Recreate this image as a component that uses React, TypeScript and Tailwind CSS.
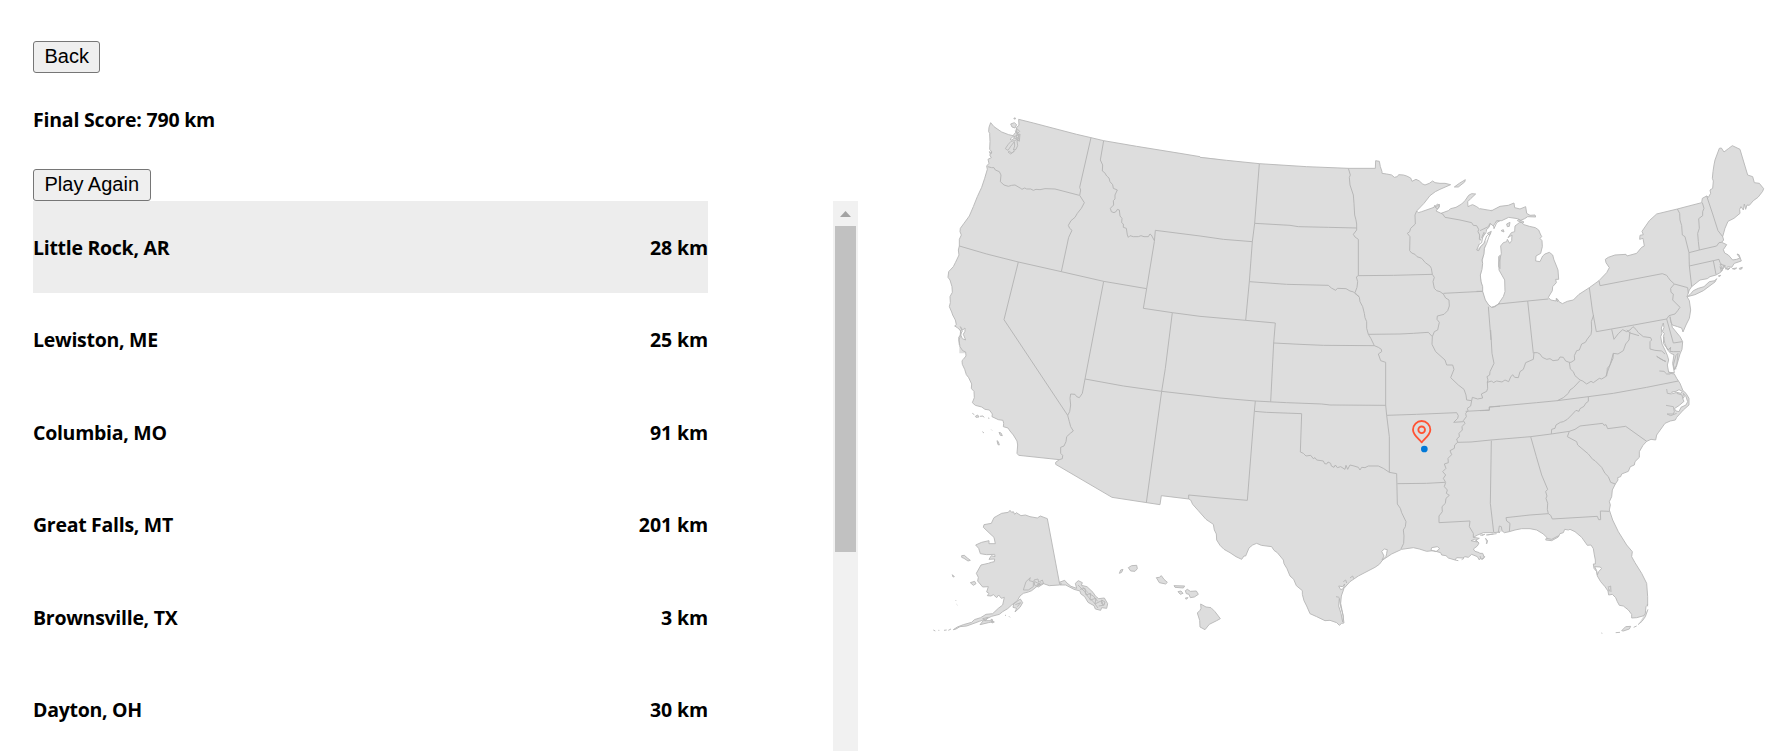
const rounds = [
  { city: "Little Rock, AR", km: 28 },
  { city: "Lewiston, ME", km: 25 },
  { city: "Columbia, MO", km: 91 },
  { city: "Great Falls, MT", km: 201 },
  { city: "Brownsville, TX", km: 3 },
  { city: "Dayton, OH", km: 30 },
];

type Section = {
  at: string;
  coast: string;
  close: string;
  borders: string;
  water?: string;
  islands?: string;
};

/* The map is drawn in six sections; each holds its coast, the inland edge that closes it, and state borders. */
const sections: Section[] = [
  {
    at: "translate(0 0)",
    coast:
      "M118,735 L116,712 L124,702 L120,690 L112,683 L104,678 L109,674 L106,660 L98,645 L95,636 L88,620 L91,608 L90,590 L97,577 L96,560 L90,540 L84,532 L86,515 L100,500 L106,488 L110,480 L117,465 L115,450 L118,438 L118,418 L124,405 L120,395 L121,385 L132,370 L148,348 L160,320 L172,290 L185,262 L194,235 L202,208 L200,198 L207,190 L204,178 L214,173 L209,165 L216,156 L209,148 L210,125 L209,100 L206,95 L207,82 L212,68 L222,80 L245,96 L266,104 L279,107 L287,97 L290,82 L297,76 L296,58 L340,69 L420,90 L470,103 L513,113 L551,122 L650,139 L780,160 L840,170",
    close: "L900,178 L900,760 L118,760 Z",
    borders:
      "M203,200 L215,203 L222,203 L226,210 L238,215 L243,225 L241,245 L252,255 L265,259 L275,256 L285,255 L302,265 L306,268 L314,264 L320,267 L332,267 L340,271 L348,268 L360,269 L375,266 L405,267 L478,286 M513,113 L479,262 L482,270 L479,286 L486,297 L493,308 L484,325 L472,340 L465,352 L453,362 L445,376 L449,385 L456,391 L446,412 L424,515 M551,122 L541,180 L548,195 L547,213 L554,218 L560,228 L567,234 L570,245 L578,254 L580,265 L592,270 L585,285 L585,297 L580,302 L581,315 L571,325 L574,335 L582,338 L589,334 L592,328 L598,330 L600,348 L606,355 L605,368 L610,372 L610,382 L619,385 L622,405 L625,412 L630,407 L640,410 L655,410 L663,407 L672,410 L685,410 L690,402 L694,405 L703,422 M118,438 L200,462 L295,486 L424,515 L551,544 L680,566 M840,408 L706,391 L703,425 L680,566 L670,625 L757,638 L840,649 M295,486 L252,659 L443,946 M551,544 L495,837 M757,638 L736,805 L725,874 L679,1208",
    water:
      "M121,680 L128,690 L135,684 L135,694 L130,703 L137,720 L127,716 L121,702 L127,694 Z M270,118 L282,107 L287,112 L275,120 Z",
    islands:
      "M293,98 L288,112 L296,116 L284,122 L273,124 L264,134 L256,146 L264,151 L273,138 L283,125 L284,138 L280,150 L288,148 L293,137 L291,122 L298,120 Z M272,72 L283,68 L290,74 L285,84 L276,81 Z M282,54 L286,54 L286,57 L282,57 Z M290,85 L299,94 L291,102 Z M264,156 L272,162 L284,152 L276,160 L268,154 Z M280,111 L300,102 L298,124 L291,118 Z M208,155 L216,158 L211,162 Z M286,92 L298,108 L288,118",
  },
  {
    at: "translate(840 0)",
    coast:
      "M0,172 L80,181 L178,191 L320,200 L445,205 L526,205 L527,182 L538,184 L541,200 L546,215 L546,220 L560,222 L575,225 L583,232 L592,230 L596,224 L610,225 L620,228 L632,234 L636,244 L648,238 L658,243 L668,252 L675,255 L688,250 L698,243 L705,248 L720,250 L735,250 L752,254 L720,268 L706,275 L690,287 L672,310 L650,333 L655,338 L665,335 L702,322 L704,316 L708,322 L718,312 L717,322 L708,333 L723,340 L745,332 L752,326 L768,322 L785,312 L795,302 L806,286 L815,281 L827,282 L812,296 L803,305 L804,320 L812,316 L818,314 L830,320 L838,326 L848,334 L868,336 L874,331 L880,334 L888,327 L900,320",
    close:
      "L900,362 L875,373 L860,388 L845,415 L830,450 L860,420 L852,460 L848,490 L842,530 L848,560 L848,574 L856,600 L866,615 L875,622 L900,612 L900,760 L0,760 Z",
    borders:
      "M900,362 L890,368 L882,386 L880,368 L870,370 L867,382 L860,388 L857,400 L848,410 L845,428 L838,432 L830,450 L836,452 L842,440 L852,430 L860,408 L873,398 L866,412 L860,430 L853,445 L852,462 L846,480 L848,490 L846,508 L841,525 L843,545 L848,560 L848,574 L856,600 L866,615 L875,622 L885,620 L900,609 M178,191 L164,370 L157,425 L148,545 L137,661 M0,408 L70,418 L157,425 M164,370 L270,376 L295,380 L385,382 L470,384 M445,205 L451,225 L448,232 L450,255 L460,285 L462,310 L464,345 L468,360 L470,372 L470,390 L460,403 L465,411 L475,418 L475,527 M148,545 L260,553 L385,556 L394,564 L407,571 L412,565 L438,566 L450,573 L461,576 L470,585 L478,590 M475,527 L580,526 L697,523 M475,527 L469,531 L473,545 L471,562 L465,578 L478,592 L480,605 L488,620 L493,640 L495,653 L500,665 L500,685 L505,703 L513,716 L523,737 L535,742 L544,748 L545,755 L535,762 L542,782 L557,787 L557,915 M505,703 L600,702 L640,700 L685,697 L697,710 M221,729 L300,733 L370,736 L523,737 M0,649 L137,661 L226,669 L221,729 L212,905 M650,333 L645,345 L646,372 L632,385 L629,395 L622,400 L630,410 L629,452 L635,459 L645,463 L651,470 L665,475 L676,488 L690,498 L694,505 L697,523 L703,532 L699,545 L703,565 L710,572 L720,575 L730,582 L737,594 L747,600 L748,618 L743,632 L732,643 L712,648 L711,658 L718,667 L713,690 L703,695 L697,710 L696,733 L707,755 L735,780 L740,795 L758,795 L762,808 L752,833 L775,855 L792,868 L798,885 L800,900 L815,902 M730,580 L848,574 M723,340 L728,342 L735,352 L780,360 L815,368 L820,376 L830,377 L836,388 L834,395 L839,405 L838,418 L844,420",
    islands:
      "M763,261 L778,250 L796,239 L794,246 L775,261 Z M704,320 L713,312 L719,318 L712,327 Z M896,470 L900,466 L900,506 L896,500 Z",
  },
  {
    at: "translate(1680 60)",
    coast:
      "M35,562 L42,560 L55,552 L70,530 L75,515 L74,480 L57,450 L57,428 L64,400 L62,378 L70,368 L80,365 L82,358 L89,370 L95,362 L96,345 L84,353 L94,338 L104,335 L105,318 L118,308 L124,307 L132,314 L148,319 L166,323 L176,330 L181,342 L185,350 L180,355 L186,362 L187,380 L182,400 L168,408 L167,423 L180,425 L188,408 L195,402 L208,397 L218,405 L222,420 L227,432 L234,450 L236,478 L227,478 L229,488 L218,500 L217,512 L205,532 L212,540 L228,543 L230,535 L236,544 L247,551 L262,544 L280,540 L297,523 L328,503 L357,482 L380,458 L388,443 L378,428 L376,418 L385,412 L405,405 L438,403 L441,408 L470,400 L485,382 L493,378 L489,355 L479,358 L480,346 L490,344 L486,334 L508,302 L530,282 L592,267 L665,248 L667,235 L680,228 L685,232 L692,220 L690,210 L698,205 L700,183 L697,175 L699,155 L702,135 L705,120 L718,85 L724,84 L732,96 L745,86 L757,77 L780,88 L785,105 L803,165 L818,170 L823,188 L838,190 L851,206 L848,214 L834,232 L820,242 L808,256 L801,255 L797,268 L793,252 L790,270 L783,260 L779,268 L780,280 L762,295 L744,304 L735,325 L728,350 L731,360 L725,367 L740,374 L730,389 L734,399 L745,405 L758,420 L770,418 L780,414 L771,402 L777,404 L784,423 L763,430 L755,442 L743,440 L738,448 L732,435 L727,448 L722,457 L708,465 L690,470 L682,476 L660,480 L635,500 L628,510 L621,530 L628,542 L632,570 L628,595 L618,615 L609,636 L605,624 L593,620 L577,615 L572,605 L570,590 L577,622 L586,633 L600,650 L608,665 L606,688 L600,702 L592,730 L583,750",
    close: "L583,780 L35,780 Z",
    borders:
      "M25,560 L33,660 M55,552 L143,543 L205,537 M143,543 L160,700 M-10,514 L8,514 M328,503 L337,570 L349,635 L440,619 L560,597 M357,482 L360,497 L547,461 L560,466 L565,473 L570,480 L583,492 L572,505 L573,517 L580,522 L578,540 L600,562 L593,572 L585,582 L567,587 L560,597 L580,669 L607,665 M583,492 L623,503 L625,520 M592,267 L599,280 L600,300 L605,317 L607,345 L615,350 L627,398 L628,438 L635,500 M667,248 L672,265 L668,275 L668,287 L656,296 L658,325 L653,340 L655,365 L658,390 M627,398 L658,390 L710,378 L717,368 L725,367 M628,438 L700,422 L717,418 L720,428 L727,435 M700,422 L708,463 M680,228 L698,282 L714,332 L728,350 M395,628 L402,658 L415,641 L428,629 L440,635 L450,630 L459,620 L468,628 L475,638 L490,650 L512,653 L515,660 L510,665 L510,687 L525,691 L545,693 L555,702 M440,630 L450,639 L477,647 M450,635 L447,660 L437,672 L430,692 L414,702 L400,700 L390,735 L378,768 M530,709 L550,721 L558,724 M552,650 L550,670 L565,690 L572,682 L570,694 L580,695 L600,695",
    water:
      "M550,609 L544,624 L546,640 L542,650 L546,672 L555,690 L562,706 L566,720 L562,735 L566,757 L583,758 L578,730 L582,704 L572,700 L563,690 L555,672 L550,650 L553,640 L547,634 L552,623 Z",
    islands:
      "M622,530 L630,524 L640,512 L655,505 L672,500 L688,485 L705,482 L710,476 L705,486 L690,497 L670,512 L645,524 Z M740,447 L750,444 L744,450 Z M757,446 L770,444 L764,448 Z M778,445 L787,442 L785,447 L779,448 Z M715,468 L722,466 L720,469 Z M720,432 L736,437 L728,448 Z M720,440 L728,450 L724,454 Z M0,266 L35,272 L60,259 L85,256 L102,249 L104,263 L120,267 L137,260 L140,280 L150,286 L165,285 L167,291 L143,290 L134,296 L122,301 L113,296 L86,292 L65,302 L50,302 L40,318 L30,310 L25,320 L0,332 M115,298 L132,306 L128,309 L112,302 Z M80,312 L90,307 L88,319 L82,320 Z M63,332 L70,329 L72,336 Z M5,353 L12,337 L14,340 L7,355 Z M22,340 L34,334 L28,345 Z M228,536 L236,541 L232,545 Z M580,735 L588,706 L594,700 L590,738 L584,748 Z",
  },
  {
    at: "translate(0 690)",
    coast:
      "M122,0 L120,22 L117,30 L120,50 L128,62 L137,66 L138,78 L130,88 L126,92 L127,103 L134,118 L139,134 L146,143 L155,162 L154,175 L158,180 L162,184 L163,203 L157,218 L166,226 L185,231 L195,238 L208,240 L217,252 L216,260 L235,269 L249,271 L251,280 L250,290 L264,294 L270,303 L280,315 L291,333 L293,345 L291,370 L296,376 L418,389 L407,397 L407,403 L576,502 L720,524 L724,497 L806,507 L812,510 L818,523 L835,542 L858,568 L880,583 L883,600 L889,612 L890,630 L900,646",
    close: "L910,655 L910,-20 L122,-20 Z",
    borders:
      "M495,147 L610,168 L725,184 L900,204 M495,147 L487,190 L478,203 L470,200 L465,193 L452,192 L450,205 L452,225 L449,245 L443,256 L448,275 L452,290 L460,303 L452,309 L440,320 L438,335 L432,348 L422,352 L422,370 L428,376 L427,386 L418,389",
    islands:
      "M270,541 L275,547 L280,545 L284,553 L289,548 L303,557 L316,555 L330,560 L352,564 L361,558 L382,566 L418,757 L425,762 L418,765 L388,767 L368,760 L350,770 L335,782 L325,786 L310,790 L300,798 L292,812 L275,825 L263,836 L248,845 L238,853 L215,859 L196,868 L178,874 L162,880 L140,888 L120,890 L108,897 L100,899 L112,891 L130,884 L155,877 L163,869 L182,863 L198,853 L218,851 L235,835 L248,825 L253,802 L244,805 L236,795 L230,803 L220,794 L213,798 L202,797 L207,790 L200,786 L205,770 L188,771 L173,753 L175,742 L169,730 L183,705 L205,700 L214,697 L223,695 L224,687 L207,688 L214,677 L225,680 L224,673 L200,674 L181,671 L176,655 L167,645 L185,637 L207,632 L207,641 L226,641 L222,622 L210,611 L190,592 L192,584 L214,580 L222,563 L245,550 L265,547 Z M310,780 L318,755 L331,743 L328,752 L340,755 L340,770 L325,780 Z M342,750 L354,747 L356,757 L367,750 L371,761 L355,771 L344,766 Z M345,755 L360,763 L350,766 L364,757 M418,757 L434,751 L441,759 L453,769 L470,775 L466,760 L475,752 L487,758 L484,766 L501,770 L519,787 L526,798 L536,806 L553,804 L563,821 L560,835 L545,833 L542,841 L526,837 L522,827 L504,817 L494,800 L482,791 L480,783 L462,778 L437,765 L420,765 Z M474,765 L494,785 L506,803 L520,815 L534,834 M487,770 L507,791 L520,798 L533,814 M480,778 L495,775 L498,795 L512,790 L510,810 L528,805 L525,822 L545,812 L550,826 L536,828 M545,810 L555,816 L552,826 L544,820 Z M281,822 L301,807 L308,818 L300,832 L285,846 L290,835 L279,832 Z M286,824 L302,818 L292,830 M125,677 L133,676 L142,684 L151,691 L144,693 L132,685 L125,682 Z M151,758 L164,754 L168,761 L160,766 Z M97,734 L103,740 L99,741 Z M106,810 L108,812 M110,823 L112,825 M180,884 L190,872 L210,872 L216,867 L219,875 L205,878 Z M213,872 L223,876 L216,879 Z M188,866 L205,862 L196,872 Z M40,900 L46,903 M55,901 L58,901 M72,901 L80,900 M85,901 L93,897 M255,856 L258,856 M267,859 L270,862 M598,730 L602,720 L609,718 L605,727 Z M625,713 L635,707 L650,706 L652,716 L645,724 L632,723 Z M709,743 L718,742 L724,737 L732,748 L742,757 L737,762 L718,758 Z M762,767 L794,768 L790,774 L765,772 Z M774,785 L783,783 L789,790 L781,793 Z M796,782 L802,778 L811,784 L829,783 L835,793 L823,801 L811,803 L807,793 L799,791 Z M796,804 L804,803 L799,808 Z M842,822 L858,831 L873,833 L885,845 L901,866 L890,872 L868,883 L855,899 L840,891 L839,871 L832,849 L840,841 L843,835 Z M157,250 L163,254 M166,259 L173,255 L177,261 L168,262 Z M180,259 L188,258 L193,262 M204,264 L208,265 M187,305 L192,309 M214,299 L216,301 M237,307 L243,309 L247,317 L241,316 Z M231,332 L235,335 L238,345 L234,344 Z",
  },
  {
    at: "translate(840 690)",
    coast:
      "M60,646 L72,658 L90,668 L108,680 L125,688 L132,678 L137,678 L147,654 L158,645 L170,640 L184,646 L215,650 L222,661 L232,668 L250,690 L252,701 L261,716 L270,738 L281,748 L289,767 L307,782 L307,793 L312,812 L320,828 L330,851 L350,860 L375,872 L390,871 L410,878 L418,886 L425,880 L432,879 L428,850 L422,820 L424,798 L432,775 L450,755 L475,738 L525,712 L538,703 L548,690 L575,672 L605,658 L640,653 L658,657 L680,664 L700,662 L722,668 L725,675 L738,677 L745,684 L765,690 L770,683 L788,684 L795,680 L805,682 L815,673 L832,680 L838,690 L842,684 L848,688 L854,680 L845,676 L838,668 L825,664 L820,657 L832,648 L837,639 L828,630 L838,625 L820,622 L833,615 L850,608 L880,608 L900,606",
    close: "L920,600 L920,-20 L60,-20 Z",
    borders:
      "M60,204 L165,213 L260,218 L365,222 L390,225 L557,226 M166,213 L163,244 L142,511 L60,504 L-34,495 L-34,507 M163,244 L200,247 L305,251 L301,366 L310,370 L318,378 L332,376 L340,386 L345,383 L350,390 L370,393 L374,401 L380,402 L384,396 L392,400 L394,408 L402,412 L406,405 L412,413 L422,410 L435,418 L438,406 L443,418 L450,405 L462,408 L475,412 L480,420 L485,412 L495,413 L505,408 L535,408 L550,415 L568,427 L590,431 L592,522 L601,535 L605,548 L618,575 L616,590 L610,600 L612,618 L611,640 L603,657 M557,225 L560,256 L568,320 L568,427 M560,256 L650,253 L770,248 L775,257 L773,265 L761,277 L790,275 M592,461 L680,460 L735,457 M815,212 L812,228 L802,235 L804,242 L797,250 L799,260 L790,272 L795,280 L786,290 L787,300 L777,310 L778,320 L770,327 L773,337 L764,345 L763,355 L750,362 L755,374 L744,385 L745,398 L733,402 L738,415 L728,425 L737,435 L730,445 L737,457 L733,470 L742,480 L739,490 L748,496 L738,505 L736,520 L726,530 L727,545 L717,558 L717,578 L810,573 L808,590 L820,610 L820,622 M773,337 L813,336 L873,330 M797,244 L868,240 L868,231 L900,229 M874,332 L871,520 L881,606 M815,212 L817,202 L833,207 L848,204 L844,192 L860,184 L863,175 L862,155",
    water:
      "M546,690 L552,678 L545,664 L553,657 L562,659 L560,670 L558,680 Z M416,768 L428,770 L434,762 L430,776 L422,779 Z M695,653 L712,650 L719,656 L708,665 L693,661 Z M813,632 L824,628 L832,636 L822,634 Z M418,805 L422,830 L430,858 L428,876 L423,850 L416,828 Z",
    islands:
      "M430,755 L437,750 L440,759 M450,744 L458,738 L461,746 M408,800 L418,802 M857,625 L862,632 L860,642 M845,615 L855,613 M862,615 L880,612 M765,690 L775,692 M785,689 L792,685",
  },
  {
    at: "translate(1680 690)",
    coast:
      "M60,608 L55,606 L58,588 L64,590 L66,602 L73,608 L88,605 L105,600 L125,596 L150,596 L170,600 L190,612 L200,622 L197,630 L215,632 L235,621 L240,611 L250,608 L254,598 L265,600 L270,598 L285,605 L305,622 L322,646 L333,645 L340,656 L343,675 L346,690 L346,702 L340,702 L342,715 L350,725 L352,738 L362,755 L375,770 L384,783 L386,795 L397,793 L407,803 L412,815 L418,826 L430,828 L445,840 L455,853 L455,864 L470,863 L492,857 L496,850 L498,830 L503,825 L503,800 L500,760 L485,730 L465,698 L455,680 L457,665 L440,645 L415,605 L398,570 L388,540 L391,525 L388,515 L395,500 L397,480 L406,462 L414,450 L413,443 L422,440 L425,432 L445,424 L451,410 L463,405 L465,395 L478,382 L478,365 L489,346 L500,334 L513,328 L527,330 L530,315 L535,308 L555,280 L571,273 L586,270 L590,262 L610,240 L627,225 L627,205 L618,190 L609,182 L600,160 L590,145 L583,132 L570,130 L565,123",
    close: "L590,118 L575,60 L545,-20 L50,-20 L50,608 Z",
    borders:
      "M32,0 L36,70 L42,100 L30,125 L29,135 L21,140 L24,150 L22,157 L35,153 L40,158 L50,153 L66,156 L75,150 L86,155 L92,141 L98,134 L104,142 L115,143 L120,125 L130,118 L137,98 L160,88 L162,68 L172,68 L180,72 L187,82 L200,88 L210,86 L219,92 L235,90 L240,81 L250,82 L257,93 L268,97 L273,97 L284,90 L283,77 L290,62 L298,60 L305,42 L316,37 L322,27 L333,13 L335,0 L334,-25 L341,-45 M28,241 L0,242 M28,241 L28,231 L170,218 L232,212 L325,200 L400,190 L500,172 L595,153 M33,330 L152,320 L214,312 L268,304 M152,320 L169,380 L185,435 L203,478 L197,485 L201,498 L198,505 L203,520 L202,538 L205,551 L150,555 L78,563 L80,573 L90,580 L88,605 M205,551 L212,556 L217,567 L352,559 L356,569 L362,569 L361,543 L388,544 M268,304 L262,320 L290,335 L293,345 L325,372 L338,388 L345,392 L365,412 L375,430 L385,440 L392,457 L406,462 M268,304 L285,298 L300,288 L368,280 L372,286 L378,284 L383,296 L437,289 L500,334 M325,200 L325,214 L317,220 L312,229 L300,236 L297,244 L288,241 L275,255 L262,268 L250,275 L241,277 L228,285 L225,295 L215,298 L214,312 M232,212 L250,203 L265,190 L270,180 L280,173 L300,152 M268,97 L271,117 L280,125 L285,137 L300,150 L308,153 L320,162 L333,154 L340,158 L358,145 L365,147 L380,138 L382,115 L390,105 L399,85 L400,70 M538,123 L552,124 L560,132 L571,132 M530,79 L540,86 L557,95",
    water:
      "M575,186 L588,184 L597,179 L607,184 L603,190 L590,187 L578,191 Z M610,190 L618,200 L623,215 L618,225 L603,232 L597,245 L588,243 L583,236 L598,226 L612,214 L608,206 L613,200 Z M344,710 L360,711 L365,715 L356,725 L352,735 L350,722 Z M385,770 L390,775 L387,784 Z",
    islands:
      "M560,177 L562,190 L575,192 M558,226 L580,230 L583,245 L580,252 L561,252 L572,257 L590,250 M590,190 L606,195 L609,207 M425,902 L437,890 L452,889 L448,897 L430,903 Z M407,908 L420,907 M364,909 L367,910 M461,892 L470,888 M474,884 L486,874 L496,860 L504,838 M502,822 L503,829 M0,615 L10,616 M18,615 L50,611 M16,625 L22,633 L19,641 M0,670 L8,670 L13,682 L4,688 L0,678 M385,772 L392,768 L393,786 M200,625 L215,628 L236,617",
  },
];

function UsMap() {
  return (
    <svg className="block h-[751px] w-[869px]" viewBox="920 0 869 751" aria-label="Map of the United States">
      <g transform="translate(920 100) scale(0.333333)" strokeLinejoin="round" strokeWidth="2.8">
        {sections.map((s) => (
          <path key={s.at} transform={s.at} d={`${s.coast} ${s.close}`} fill="#dddddd" />
        ))}
        {sections.map((s) => (
          <g key={s.at} transform={s.at} stroke="#b8b8b8">
            <path d={s.water ?? ""} fill="#ffffff" />
            <path d={s.islands ?? ""} fill="#dddddd" />
            <path d={s.coast} fill="none" />
            <path d={s.borders} fill="none" stroke="#b4b4b4" />
          </g>
        ))}
        <g transform="translate(840 690)">
          <path
            d="M665,337 C658,328 639,315 639,299 A26,26 0 0 1 691,299 C691,315 672,328 665,337 Z"
            fill="none"
            stroke="#ff5233"
            strokeWidth="5.5"
          />
          <circle cx="665" cy="299.500" r="10" fill="none" stroke="#ff5233" strokeWidth="5.5" />
          <circle cx="673" cy="357" r="10" fill="#0078d7" />
        </g>
      </g>
    </svg>
  );
}

const buttonStyle =
  "block h-8 rounded-[3px] border border-[#767676] bg-[#efefef] px-[10.500px] pb-[2px] font-['Liberation_Sans',Arial,sans-serif] text-[20px] font-normal leading-[28px] text-black";

export default function App() {
  return (
    <main className="flex h-[751px] overflow-hidden bg-white font-['Open_Sans','Noto_Sans',sans-serif] text-[19.500px] font-bold text-black">
      <section className="flex w-[920px] shrink-0 flex-col items-start pl-[33px] pt-[41px]">
        <button className={buttonStyle}>Back</button>
        <h4 className="flex h-24 items-center pb-0.5 tracking-[-0.2px]">Final Score: 790 km</h4>
        <button className={buttonStyle}>Play Again</button>
        <div className="flex h-[550px] w-[825px] justify-between overflow-hidden">
          <ul className="w-[675px]">
            {rounds.map((r, i) => (
              <li
                key={r.city}
                className={`flex h-[92.400px] items-center justify-between pt-px ${i === 0 ? "bg-[#ededed]" : ""}`}
              >
                <span className="tracking-[-0.28px]">{r.city}</span>
                <span className="tracking-[-0.1px]">{r.km} km</span>
              </li>
            ))}
          </ul>
          <div className="flex w-[25px] flex-col items-center bg-[#f1f1f1]">
            <svg className="h-[25px] w-[25px] shrink-0" viewBox="0 0 25 25">
              <path d="M7 16 L12.500 10 L18 16 Z" fill="#a3a3a3" />
            </svg>
            <div className="h-[326px] w-[21px] bg-[#c1c1c1]" />
          </div>
        </div>
      </section>
      <UsMap />
    </main>
  );
}
